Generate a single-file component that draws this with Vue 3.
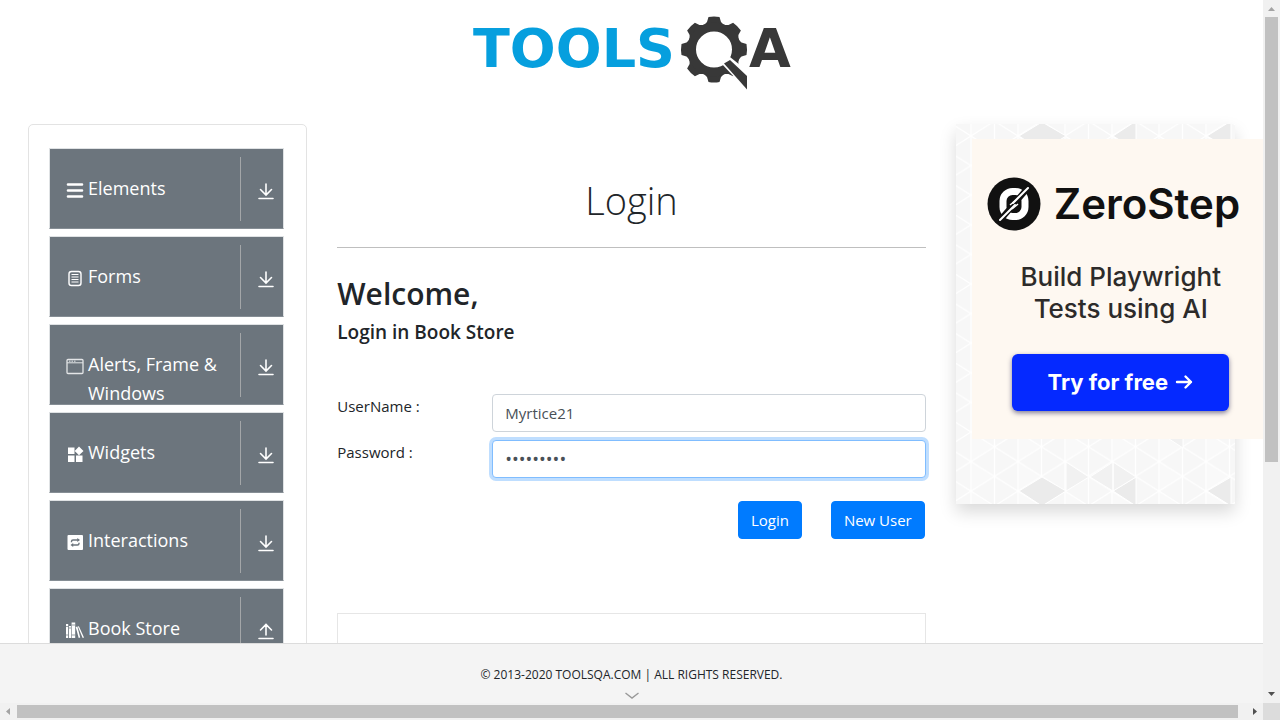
<script setup>
import { ref } from 'vue'

const groups = [
  { label: 'Elements', icon: 'menu' },
  { label: 'Forms', icon: 'form' },
  { label: 'Alerts, Frame & Windows', icon: 'window' },
  { label: 'Widgets', icon: 'widgets' },
  { label: 'Interactions', icon: 'repeat' },
  { label: 'Book Store', icon: 'books', open: true },
]

const teeth = [0, 45, 90, 135, 180, 225, 270, 315]

const username = ref('Myrtice21')
const password = ref('bookstore')
</script>

<template>
  <div class="window">
    <div class="viewport">
      <header class="header">
        <a class="logo" href="#" aria-label="ToolsQA">
          <svg width="324" height="76" viewBox="0 0 324 76">
            <text class="logo-text" x="3" y="51" fill="#069fde">TOOLS</text>
            <g fill="#383838">
              <path
                v-for="angle in teeth"
                :key="angle"
                d="M238.500 1 Q244 0 249.500 1 L251 6 L256 11 H232 L237 6 Z"
                :transform="`rotate(${angle} 244 33.5)`"
              />
            </g>
            <circle cx="244" cy="33.5" r="22.500" fill="none" stroke="#383838" stroke-width="9" />
            <path d="M251 47 L260 41 L280 57 V78 Z" fill="#fff" />
            <path d="M254 47.500 L260 44 L277 60 V73.500 Z" fill="#383838" />
            <text class="logo-text" x="279" y="51" fill="#383838">A</text>
          </svg>
        </a>
      </header>

      <div class="columns">
        <aside class="column">
          <nav class="menu" aria-label="Sections">
            <button v-for="g in groups" :key="g.label" class="group" type="button" :aria-expanded="!!g.open">
              <span class="group-icon">
                <svg v-if="g.icon === 'menu'" width="18" height="18" viewBox="0 0 18 18" stroke="#fff" stroke-width="2.6" stroke-linecap="round">
                  <path d="M2 3.5h14M2 9.5h14M2 15.5h14" />
                </svg>
                <svg v-else-if="g.icon === 'form'" width="18" height="18" viewBox="0 0 18 18" fill="none" stroke="#fff">
                  <rect x="3" y="2.5" width="12" height="14" rx="2.5" stroke-width="1.4" />
                  <path d="M5.5 5.5h7M5.5 8h7M5.5 10.5h7M5.5 13h7" stroke-width="1" />
                </svg>
                <svg v-else-if="g.icon === 'window'" width="18" height="18" viewBox="0 0 18 18" fill="none" stroke="#e3e5e7">
                  <rect x="1" y="2.5" width="16" height="14" rx="1" stroke-width="1.3" />
                  <path d="M1 5.8h16" stroke-width="1" />
                  <path d="M3 4.2h1.5M5.5 4.2h1.5M8 4.2h1.5" stroke-width="1" />
                </svg>
                <svg v-else-if="g.icon === 'widgets'" width="18" height="18" viewBox="0 0 18 18" fill="#fff">
                  <path d="M2 2.5h6.5V9H2zM2 10.5h6.5V17H2zM10 10.5h6.500V17H10zM13 1.500l4.500 4.500L13 10.300 8.700 6z" />
                </svg>
                <svg v-else-if="g.icon === 'repeat'" width="18" height="18" viewBox="0 0 18 18">
                  <rect x="1.500" y="2" width="15.500" height="15" rx="1" fill="#fff" />
                  <path d="M5.500 9.200V8.500q0-1.500 1.500-1.500h5.500M13 9.800v.7q0 1.500-1.500 1.500H6" fill="none" stroke="#6c757d" stroke-width="1.400" />
                  <path d="M11.300 5l2.700 2-2.700 2zM7.200 10l-2.700 2 2.700 2z" fill="#6c757d" />
                </svg>
                <svg v-else width="18" height="18" viewBox="0 0 18 18" fill="#fff">
                  <path d="M0 3h2.200v14H0zM3 5h2v12H3zM5.600 1.500h3.600V17H5.600zM9.700 6l1.700-.400 2.800 11-1.500.400zM11.800 5.600l1.100-.400L18 16.500l-1.300.5z" />
                  <path d="M0 5.500h2.200M0 14h2.200M3 7h2M5.600 4h3.600M5.600 14h3.600" stroke="#6c757d" stroke-width=".7" />
                </svg>
              </span>
              <span class="group-label">{{ g.label }}</span>
              <span class="group-toggle">
                <svg width="16" height="17" viewBox="0 0 16 17" fill="none" stroke="#fff" stroke-width="1.600" stroke-linecap="round">
                  <path v-if="g.open" d="M8 12V1.500M2.500 7L8 1.500 13.500 7M1 15.500h14" />
                  <path v-else d="M8 1v11M2.500 6.500L8 12l5.500-5.500M1 15.500h14" />
                </svg>
              </span>
            </button>
          </nav>
        </aside>

        <main class="column">
          <h1 class="title">Login</h1>
          <form @submit.prevent>
            <h2 class="welcome">Welcome,</h2>
            <h5 class="subtitle">Login in Book Store</h5>
            <div class="field">
              <label for="userName">UserName :</label>
              <input id="userName" v-model="username" type="text" autocomplete="off" />
            </div>
            <div class="field">
              <label for="password">Password :</label>
              <input id="password" v-model="password" class="focused" type="password" autocomplete="off" />
            </div>
            <div class="actions">
              <button class="btn" type="submit">Login</button>
              <button class="btn" type="button">New User</button>
            </div>
          </form>
          <div class="banner"></div>
        </main>

        <aside class="column">
          <div class="promo">
            <svg class="promo-pattern" width="100%" height="100%" aria-hidden="true">
              <defs>
                <pattern id="tri" x="15" y="12" width="47" height="29.600" patternUnits="userSpaceOnUse">
                  <rect width="47" height="29.600" fill="#f7f7f7" />
                  <path d="M0 0L23.500 14.800 0 29.600z" fill="#f9f9f9" />
                  <path d="M0 0V29.600M23.500 0V29.600M47 0V29.600M0 0L47 29.600M47 0L0 29.600" fill="none" stroke="#fff" stroke-width="1.300" />
                </pattern>
              </defs>
              <rect width="100%" height="100%" fill="url(#tri)" />
              <g fill="#ebebeb" stroke="#fff" stroke-width="1">
                <path d="M63 12L86-2l24 14-24 15zM157 12l23-15v29zM251 12l24-15v29z" />
                <path d="M63 367l23-14 24 14-24 15zM157 367l23-14v29zM251 367l24-14v29z" />
              </g>
              <g fill="#f1f1f1" stroke="#fff" stroke-width="1">
                <path d="M110 338l23 15-23 14zM134 353l23-15v29zM157 338l23 15-23 14zM227 309v15l-23-15z" />
              </g>
            </svg>
            <div class="ad">
              <div class="brand">
                <svg width="54" height="54" viewBox="0 0 54 54">
                  <circle cx="27" cy="27" r="26.500" fill="#111" />
                  <rect x="16" y="14.500" width="22" height="25" rx="9.500" fill="none" stroke="#fff" stroke-width="7" />
                  <path d="M12 44.500L42 9.500" stroke="#111" stroke-width="6" />
                  <path d="M13 43L28 28M26 26L41 11" stroke="#fff" stroke-width="2" stroke-linecap="round" />
                  <path d="M23 28l6-5M25 32l6-5" stroke="#fff" stroke-width="1.500" />
                </svg>
                <span>ZeroStep</span>
              </div>
              <p class="pitch">Build Playwright<br />Tests using AI</p>
              <a class="cta" href="#">
                <span>Try for free</span>
                <svg width="18" height="16" viewBox="0 0 18 16" fill="none" stroke="#fff" stroke-width="2.400" stroke-linecap="round" stroke-linejoin="round">
                  <path d="M2 8h14M10.500 2.500L16 8l-5.500 5.500" />
                </svg>
              </a>
            </div>
          </div>
        </aside>
      </div>
    </div>

    <div class="bar bar-v" aria-hidden="true">
      <svg width="17" height="17" viewBox="0 0 17 17"><path d="M5 11l3.500-4 3.500 4z" fill="#a3a3a3" /></svg>
      <div class="thumb"></div>
      <div class="rest"></div>
      <svg width="17" height="17" viewBox="0 0 17 17"><path d="M5 6l3.500 4L12 6z" fill="#505050" /></svg>
    </div>

    <footer class="footer">
      <span>© 2013-2020 TOOLSQA.COM | ALL RIGHTS RESERVED.</span>
      <svg width="14" height="8" viewBox="0 0 14 8" fill="none" stroke="#999" stroke-width="1.400">
        <path d="M.5 1L7 6l6.500-5" />
      </svg>
    </footer>

    <div class="bar bar-h" aria-hidden="true">
      <svg width="17" height="17" viewBox="0 0 17 17"><path d="M10 5L6 8.500 10 12z" fill="#a3a3a3" /></svg>
      <div class="thumb"></div>
      <div class="rest"></div>
      <svg width="17" height="17" viewBox="0 0 17 17"><path d="M7 5l4 3.500L7 12z" fill="#505050" /></svg>
    </div>
    <div class="corner"></div>
  </div>
</template>

<style>
body {
  margin: 0;
}
</style>

<style scoped>
* {
  box-sizing: border-box;
}
.window {
  display: grid;
  grid-template-columns: minmax(0, 1fr) 17px;
  grid-template-rows: minmax(0, 1fr) 60px 17px;
  height: 100vh;
  overflow: hidden;
  background: #fff;
  color: #212529;
  font: 15px/24px "Segoe UI", "Open Sans", "Noto Sans", sans-serif;
}
.viewport {
  overflow: hidden;
}
.header {
  display: flex;
  justify-content: center;
  padding: 16px 0 32px;
}
.logo svg {
  display: block;
}
.logo-text {
  font: 700 54px "DejaVu Sans", sans-serif;
}
.columns {
  display: grid;
  grid-template-columns: minmax(0, 1fr) minmax(0, 2fr) minmax(0, 1fr);
  padding: 0 13px;
}
.column {
  padding: 0 15px;
}

.menu {
  display: flex;
  flex-direction: column;
  gap: 7px;
  padding: 23px 22px 24px 20px;
  border: 1px solid #e3e3e3;
  border-radius: 5px;
}
.group {
  display: flex;
  align-items: flex-start;
  height: 81px;
  padding: 0 0 0 16px;
  overflow: hidden;
  border: 1px solid #dfe2e4;
  border-bottom-color: #868e95;
  border-radius: 0;
  background: #6c757d;
  color: #fff;
  font: inherit;
  font-size: 18px;
  line-height: 29px;
  text-align: left;
}
.group-icon {
  flex: none;
  width: 22px;
  padding-top: 32px;
}
.group-icon svg,
.group-toggle svg {
  display: block;
}
.group-label {
  flex: 1;
  padding-top: 25px;
}
.group-toggle {
  flex: none;
  height: 64px;
  margin-top: 8px;
  padding: 26px 9px 0 17px;
  border-left: 1px solid #a3a6a8;
}

.title {
  margin: 0;
  padding: 52px 0 23px;
  border-bottom: 1px solid #bfbfbf;
  font-size: 38px;
  font-weight: 300;
  line-height: 48px;
  text-align: center;
}
.welcome {
  margin: 27px 0 7px;
  font-size: 30px;
  font-weight: 600;
  line-height: 38px;
}
.subtitle {
  margin: 0 0 50px;
  font-size: 19px;
  font-weight: 600;
  line-height: 24px;
}
.field {
  display: grid;
  grid-template-columns: 155px minmax(0, 1fr);
  margin-bottom: 8px;
}
.field input {
  height: 38px;
  padding: 0 12px;
  border: 1px solid #ced4da;
  border-radius: 4px;
  outline: none;
  background: #fff;
  color: #495057;
  font: inherit;
}
.field .focused {
  border-color: #80bdff;
  box-shadow: 0 0 0 3px #bfdeff;
  font-size: 18px;
}
.actions {
  display: flex;
  justify-content: flex-end;
  gap: 29px;
  padding: 15px 1px 0 0;
}
.btn {
  height: 38px;
  padding: 0 12px;
  border: 1px solid #007bff;
  border-radius: 4px;
  background: #007bff;
  color: #fff;
  font: inherit;
}
.banner {
  height: 100px;
  margin-top: 74px;
  border: 1px solid #e6e6e6;
}

.promo {
  position: relative;
  height: 380px;
  padding: 15px 16px;
  box-shadow: 0 8px 16px rgba(0, 0, 0, 0.15);
}
.promo-pattern {
  position: absolute;
  inset: 0;
}
.ad {
  position: relative;
  display: flex;
  flex-direction: column;
  align-items: flex-start;
  width: 300px;
  height: 300px;
  padding: 38px 0 0 15px;
  background: #fef8f1;
  font-family: Inter, sans-serif;
}
.brand {
  display: flex;
  align-items: center;
  gap: 13px;
  color: #111;
  font-size: 42px;
  font-weight: 600;
  line-height: 54px;
}
.pitch {
  margin: 30px 0 29px;
  width: 268px;
  color: #2d2b2a;
  font-size: 26px;
  font-weight: 500;
  line-height: 32px;
  text-align: center;
}
.cta {
  display: flex;
  align-items: center;
  justify-content: center;
  gap: 7px;
  width: 217px;
  height: 57px;
  margin-left: 25px;
  padding-bottom: 2px;
  border-radius: 6px;
  background: #0529ff;
  box-shadow: 0 2px 5px rgba(0, 0, 60, 0.5);
  color: #fff;
  font-size: 22px;
  font-weight: 700;
  text-decoration: none;
}

.footer {
  display: flex;
  flex-direction: column;
  align-items: center;
  gap: 6px;
  padding-top: 20px;
  border-top: 1px solid #dcdcdc;
  background: #f4f4f4;
  font-size: 12px;
  line-height: 22px;
}

.bar {
  display: flex;
  background: #f1f1f1;
}
.bar svg {
  display: block;
  flex: none;
}
.thumb {
  background: #c1c1c1;
}
.bar-v {
  flex-direction: column;
  grid-row: 1 / 3;
  grid-column: 2;
}
.bar-v .thumb {
  flex: 445;
  margin: 0 2px;
}
.bar-v .rest {
  flex: 224;
}
.bar-h .thumb {
  flex: 1221;
  margin: 2px 0;
}
.bar-h .rest {
  flex: 8;
}
.corner {
  background: #dcdcdc;
}
</style>
